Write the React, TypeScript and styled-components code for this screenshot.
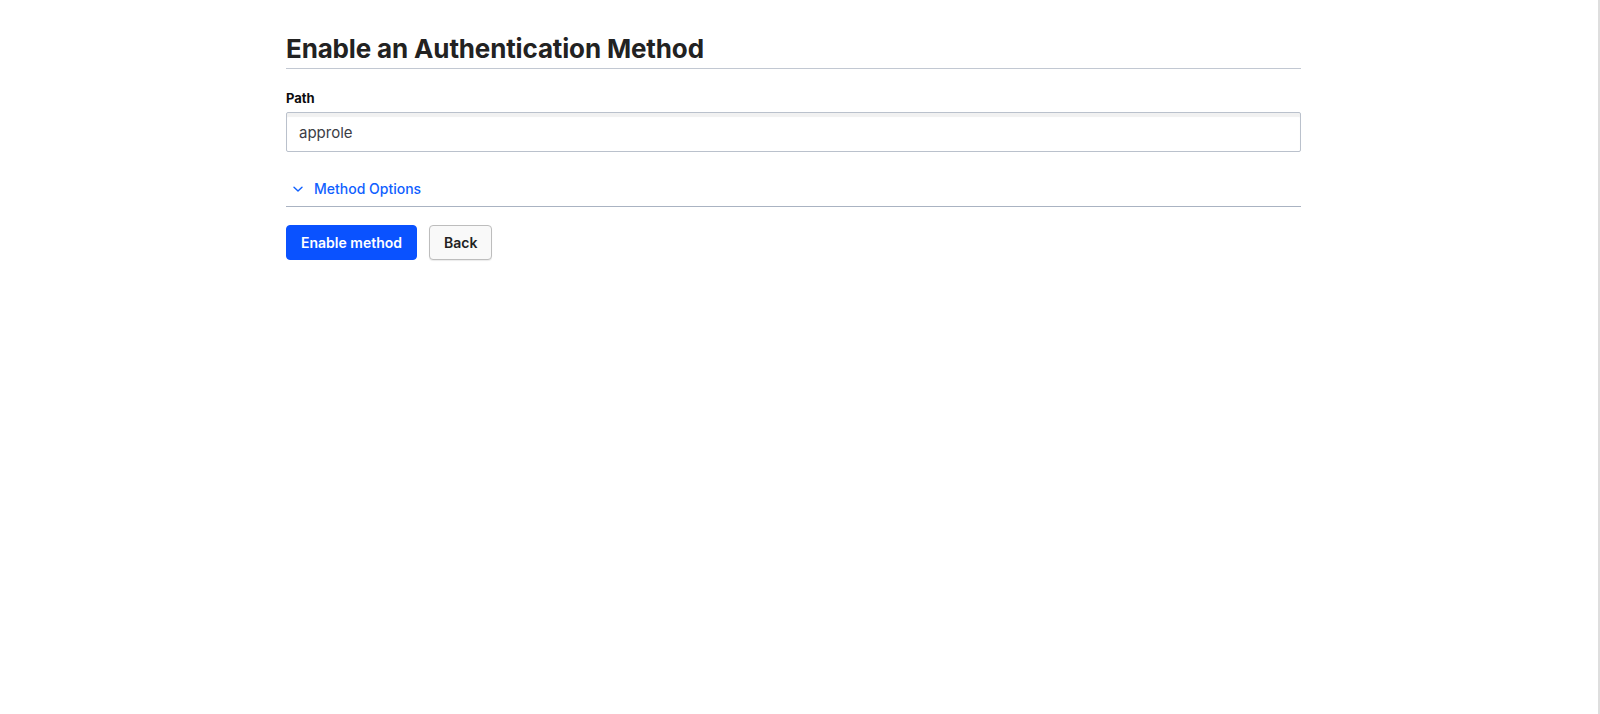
import React from "react";
import styled, { createGlobalStyle } from "styled-components";

const GlobalStyle = createGlobalStyle`
  html, body {
    margin: 0;
    padding: 0;
    background: #ffffff;
  }
  body {
    font-family: Inter, "Noto Sans", "Liberation Sans", sans-serif;
    color: #222222;
  }
`;

const Page = styled.div`
  min-height: 714px;
  box-sizing: border-box;
  border-right: 2px solid #dedede;
  padding: 34px 0 0 286px;
`;

const Form = styled.form`
  width: 1015px;
`;

const Title = styled.h1`
  margin: 0 0 20px;
  padding-bottom: 4px;
  border-bottom: 1px solid #c2c8d2;
  font-size: 26px;
  line-height: 30px;
  font-weight: 700;
  color: #222222;
  letter-spacing: -0.15px;
`;

const Label = styled.label`
  display: block;
  font-size: 13px;
  line-height: 18px;
  font-weight: 700;
  color: #0c0c0e;
  margin-bottom: 5px;
`;

const Input = styled.input`
  display: block;
  width: 100%;
  height: 40px;
  box-sizing: border-box;
  padding: 0 12px;
  border: 1px solid #bac1cc;
  border-radius: 2px;
  box-shadow: inset 0 4px 1px rgba(10, 10, 10, 0.06);
  font-family: inherit;
  font-size: 15px;
  color: #3b3d45;
  background: #fff;
  outline: none;
`;

const Toggle = styled.button`
  display: flex;
  align-items: center;
  gap: 10px;
  width: 100%;
  margin-top: 27px;
  padding: 0 0 7px 6px;
  border: 0;
  border-bottom: 1px solid #aab3c2;
  background: none;
  font-family: inherit;
  font-size: 14px;
  line-height: 20px;
  font-weight: 500;
  color: #1060ff;
  cursor: pointer;
  text-align: left;
`;

const Actions = styled.div`
  display: flex;
  gap: 12px;
  margin-top: 18px;
`;

const Button = styled.button<{ $primary?: boolean }>`
  height: 35px;
  box-sizing: border-box;
  padding: 0 14px;
  border-radius: 4px;
  border: 1px solid ${(p) => (p.$primary ? "#0a52ff" : "#bdbdbd")};
  background: ${(p) => (p.$primary ? "#0a52ff" : "#f9f9f9")};
  color: ${(p) => (p.$primary ? "#ffffff" : "#222222")};
  box-shadow: ${(p) =>
    p.$primary ? "none" : "0 1px 1px rgba(10, 10, 10, 0.08)"};
  font-family: inherit;
  font-size: 14px;
  font-weight: 600;
  cursor: pointer;
`;

function Chevron() {
  return (
    <svg width="12" height="12" viewBox="0 0 12 12" fill="none">
      <path
        d="M2 4.2 L6 8 L10 4.2"
        stroke="currentColor"
        strokeWidth="1.4"
        strokeLinecap="round"
        strokeLinejoin="round"
      />
    </svg>
  );
}

export default function App() {
  return (
    <>
      <GlobalStyle />
      <Page>
        <Form onSubmit={(e) => e.preventDefault()}>
          <Title>Enable an Authentication Method</Title>
          <Label htmlFor="path">Path</Label>
          <Input id="path" defaultValue="approle" />
          <Toggle type="button">
            <Chevron />
            Method Options
          </Toggle>
          <Actions>
            <Button $primary type="submit">
              Enable method
            </Button>
            <Button type="button">Back</Button>
          </Actions>
        </Form>
      </Page>
    </>
  );
}
